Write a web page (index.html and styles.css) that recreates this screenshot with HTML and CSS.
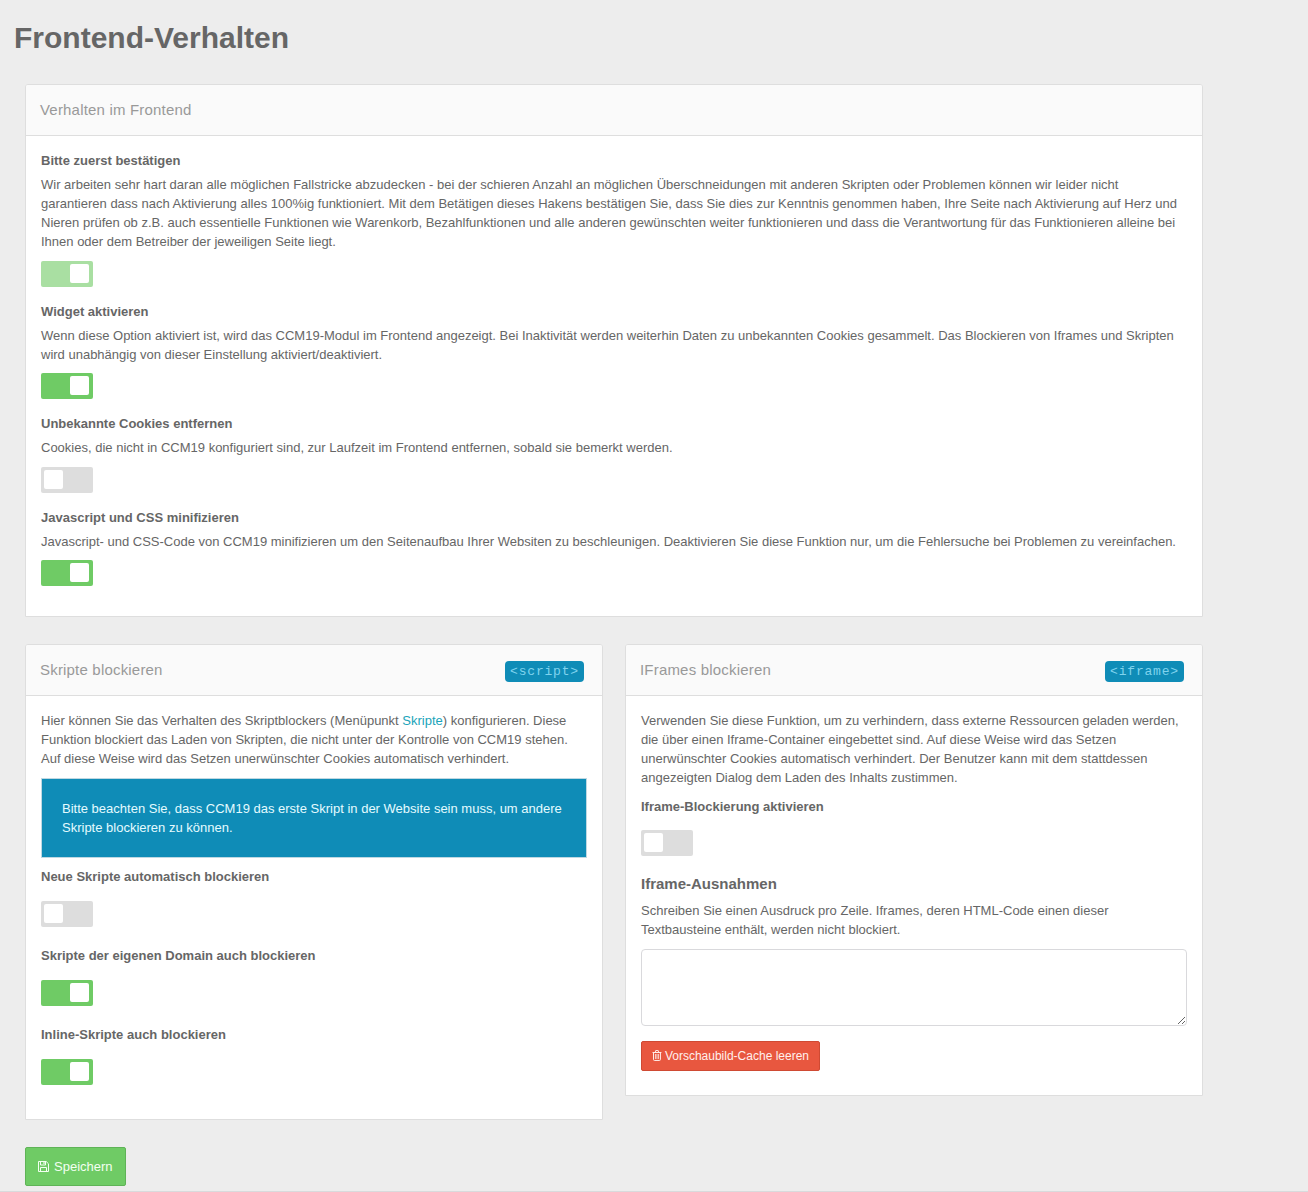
FILE: index.html
```html
<!DOCTYPE html>
<html lang="de">
<head>
<meta charset="utf-8">
<title>Frontend-Verhalten</title>
<link rel="stylesheet" href="styles.css">
</head>
<body>
<main class="page">
  <h1 class="title">Frontend-Verhalten</h1>
  <form class="content">
    <section class="panel panel-main">
      <header class="panel-head"><h2>Verhalten im Frontend</h2></header>
      <div class="panel-body">
        <div class="option">
          <h3 class="label">Bitte zuerst bestätigen</h3>
          <p>Wir arbeiten sehr hart daran alle möglichen Fallstricke abzudecken - bei der schieren Anzahl an möglichen Überschneidungen mit anderen Skripten oder Problemen können wir leider nicht<br>garantieren dass nach Aktivierung alles 100%ig funktioniert. Mit dem Betätigen dieses Hakens bestätigen Sie, dass Sie dies zur Kenntnis genommen haben, Ihre Seite nach Aktivierung auf Herz und<br>Nieren prüfen ob z.B. auch essentielle Funktionen wie Warenkorb, Bezahlfunktionen und alle anderen gewünschten weiter funktionieren und dass die Verantwortung für das Funktionieren alleine bei<br>Ihnen oder dem Betreiber der jeweiligen Seite liegt.</p>
          <span class="switch on disabled"></span>
        </div>
        <div class="option">
          <h3 class="label">Widget aktivieren</h3>
          <p>Wenn diese Option aktiviert ist, wird das CCM19-Modul im Frontend angezeigt. Bei Inaktivität werden weiterhin Daten zu unbekannten Cookies gesammelt. Das Blockieren von Iframes und Skripten<br>wird unabhängig von dieser Einstellung aktiviert/deaktiviert.</p>
          <span class="switch on"></span>
        </div>
        <div class="option">
          <h3 class="label">Unbekannte Cookies entfernen</h3>
          <p>Cookies, die nicht in CCM19 konfiguriert sind, zur Laufzeit im Frontend entfernen, sobald sie bemerkt werden.</p>
          <span class="switch"></span>
        </div>
        <div class="option">
          <h3 class="label">Javascript und CSS minifizieren</h3>
          <p>Javascript- und CSS-Code von CCM19 minifizieren um den Seitenaufbau Ihrer Websiten zu beschleunigen. Deaktivieren Sie diese Funktion nur, um die Fehlersuche bei Problemen zu vereinfachen.</p>
          <span class="switch on"></span>
        </div>
      </div>
    </section>
    <div class="columns">
      <section class="panel panel-scripts">
        <header class="panel-head"><h2>Skripte blockieren</h2><code class="tag">&lt;script&gt;</code></header>
        <div class="panel-body">
          <p>Hier können Sie das Verhalten des Skriptblockers (Menüpunkt <a class="link">Skripte</a>) konfigurieren. Diese<br>Funktion blockiert das Laden von Skripten, die nicht unter der Kontrolle von CCM19 stehen.<br>Auf diese Weise wird das Setzen unerwünschter Cookies automatisch verhindert.</p>
          <p class="alert">Bitte beachten Sie, dass CCM19 das erste Skript in der Website sein muss, um andere<br>Skripte blockieren zu können.</p>
          <div class="toggle-row"><h3 class="label">Neue Skripte automatisch blockieren</h3><span class="switch"></span></div>
          <div class="toggle-row"><h3 class="label">Skripte der eigenen Domain auch blockieren</h3><span class="switch on"></span></div>
          <div class="toggle-row"><h3 class="label">Inline-Skripte auch blockieren</h3><span class="switch on"></span></div>
        </div>
      </section>
      <section class="panel panel-iframes">
        <header class="panel-head"><h2>IFrames blockieren</h2><code class="tag">&lt;iframe&gt;</code></header>
        <div class="panel-body">
          <p>Verwenden Sie diese Funktion, um zu verhindern, dass externe Ressourcen geladen werden,<br>die über einen Iframe-Container eingebettet sind. Auf diese Weise wird das Setzen<br>unerwünschter Cookies automatisch verhindert. Der Benutzer kann mit dem stattdessen<br>angezeigten Dialog dem Laden des Inhalts zustimmen.</p>
          <div class="toggle-row iframe-toggle"><h3 class="label">Iframe-Blockierung aktivieren</h3><span class="switch"></span></div>
          <h3 class="subhead">Iframe-Ausnahmen</h3>
          <p>Schreiben Sie einen Ausdruck pro Zeile. Iframes, deren HTML-Code einen dieser<br>Textbausteine enthält, werden nicht blockiert.</p>
          <textarea class="exceptions" aria-label="Iframe-Ausnahmen"></textarea>
          <button type="button" class="btn btn-danger">
            <svg width="10" height="11" viewBox="0 0 10 11" fill="none" stroke="currentColor"><path d="M.5 2.500h9M3.500 2.500v-1.500q0-.5.5-.5h2q.5 0 .5.5v1.500M1.500 3v6.500q0 1 1 1h5q1 0 1-1V3"/><path d="M3.500 4v5M5 4v5M6.500 4v5" stroke-width=".8"/></svg>
            <span>Vorschaubild-Cache leeren</span>
          </button>
        </div>
      </section>
    </div>
    <button type="button" class="btn btn-save">
      <svg width="11" height="11" viewBox="0 0 11 11" fill="none" stroke="currentColor"><path d="M.5.5h7.700l2.300 2.300v7.700H.5zM2.500.5v3.500h5v-3.500M2.500 10.500v-4h6v4"/><path d="M6 1v2" stroke-width="1.200"/></svg>
      <span>Speichern</span>
    </button>
  </form>
</main>
</body>
</html>
```
FILE: styles.css
```css
* { box-sizing: border-box; }
body {
  margin: 0;
  background: #ededed;
  color: #666;
  font: 13px/19px "Liberation Sans", Arial, sans-serif;
}
h1, h2, h3, p { margin: 0; }
.page {
  height: 1192px;
  border-bottom: 1px solid #d9dadc;
  overflow: hidden;
}
.title {
  padding: 20px 0 0 14px;
  font-size: 30px;
  line-height: 36px;
}
.content {
  width: 1178px;
  margin: 28px 0 0 25px;
}
.panel {
  background: #fff;
  border: 1px solid #dedede;
  border-radius: 3px 3px 0 0;
}
.panel-main { height: 533px; }
.panel-head {
  display: flex;
  align-items: center;
  justify-content: space-between;
  height: 51px;
  padding: 0 18px 0 14px;
  background: #fafafa;
  border-bottom: 1px solid #dedede;
  border-radius: 2px 2px 0 0;
}
.panel-head h2 {
  color: #999;
  font-size: 15px;
  font-weight: 400;
  line-height: 20px;
  letter-spacing: .19px;
}
.panel-body {
  display: flex;
  flex-direction: column;
  align-items: flex-start;
  padding: 15px;
  white-space: nowrap;
}
.option { margin-bottom: 15px; }
.option p { margin: 5px 0 9.5px; }
.label { font-size: 13px; line-height: 19px; }
.switch {
  display: flex;
  width: 52px;
  height: 26px;
  padding: 3px;
  background: #ddd;
  border-radius: 2px;
}
.switch::before {
  content: "";
  width: 19px;
  height: 19px;
  background: #fff;
  border-radius: 2px;
}
.switch.on { justify-content: flex-end; padding-right: 4px; background: #6fcb65; }
.switch.disabled { background: #a9dfa2; }
.columns {
  display: grid;
  grid-template-columns: 578px 578px;
  gap: 22px;
  align-items: start;
  margin-top: 27px;
}
.panel-scripts { height: 476px; }
.panel-iframes { height: 452px; }
.tag {
  height: 21px;
  margin-top: 2px;
  padding: 0 5px;
  background: #0f8cb7;
  border-radius: 4px;
  color: #7fd3ee;
  font: 13px/21px "Liberation Mono", "Courier New", monospace;
  letter-spacing: .82px;
}
.link { color: #1aa4ba; }
.alert {
  align-self: stretch;
  margin: 10px 0 9px;
  padding: 20px;
  background: #0f8cb7;
  border: 1px solid #bfd8e2;
  color: #e4fbff;
}
.toggle-row { margin-bottom: 19px; }
.toggle-row .switch { margin-top: 15px; }
.iframe-toggle { margin: 10px 0 18px; }
.iframe-toggle .switch { margin-top: 14px; }
.subhead {
  margin-bottom: 7px;
  font-size: 15px;
  line-height: 20px;
}
.exceptions {
  width: 546px;
  height: 77px;
  margin: 10px 0 15px;
  background: #fff;
  border: 1px solid #d9d9dc;
  border-radius: 4px;
  resize: vertical;
}
.btn {
  display: flex;
  align-items: center;
  font-family: inherit;
  border-radius: 2px;
  white-space: nowrap;
}
.btn-danger {
  width: 179px;
  height: 30px;
  padding: 0 10px 1px;
  gap: 3px;
  background: #e8573f;
  border: 1px solid #cf4a33;
  color: #fff0ed;
  font-size: 12px;
}
.btn-save {
  width: 101px;
  height: 39px;
  margin-top: 27px;
  padding: 0 12px;
  gap: 5px;
  background: #6fcb65;
  border: 1px solid #5fb357;
  color: #f3fff1;
  font-size: 13px;
}
```
